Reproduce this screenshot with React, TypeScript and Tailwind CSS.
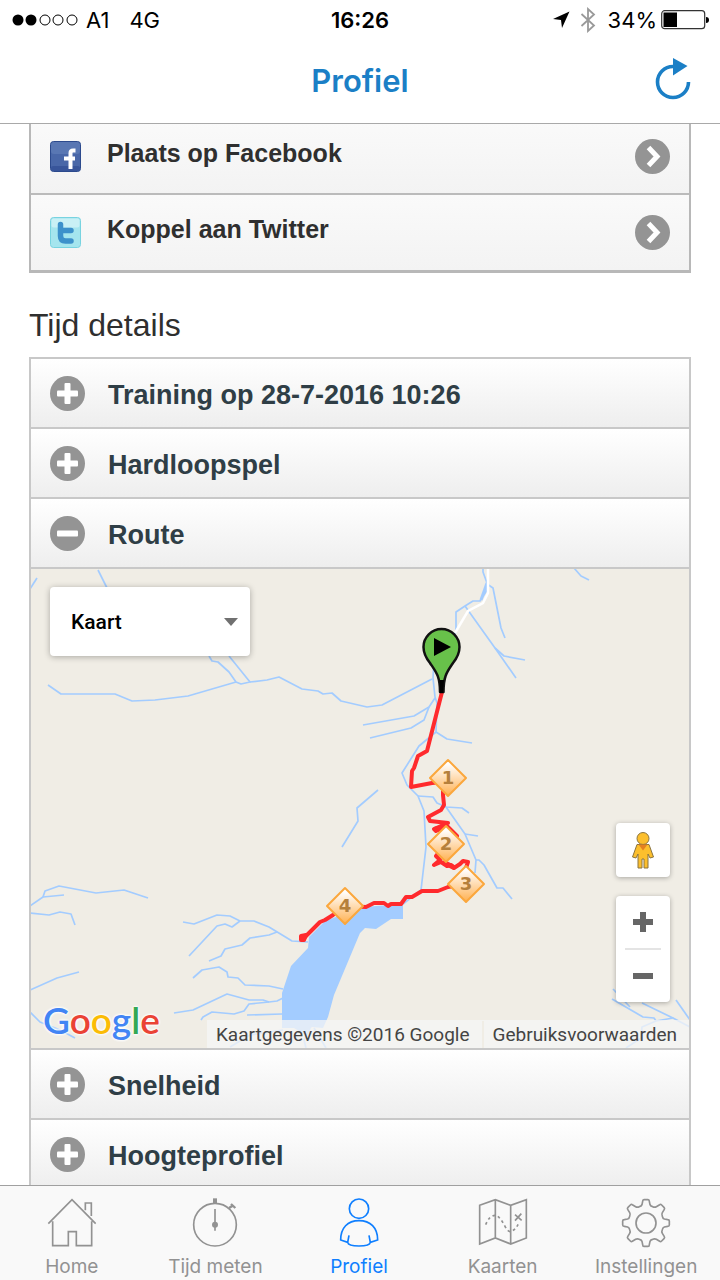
import type { ReactNode } from "react";

const streams = [
    "M30 589L37 578", "M98 570L107 588",
    "M209 656L212 661L218 662L229 672L236 682L241 684L250 682L229 656",
    "M48 685L61 694H115L132 701L155 700L188 696L236 682",
    "M250 682L267 680L279 677L302 689L318 691L323 694L332 693L341 701L367 707L382 705L432 679",
    "M483 568V572L487 583V590L480 601H473L465 606L456 612V632L434 660L433 678L435 697L437 703L436 732",
    "M487 584L493 588L501 628L505 638", "M465 606L495 648L516 678", "M495 648L504 656L525 660",
    "M574 568L581 576L589 580",
    "M435 698L429 707L414 716L363 725", "M429 707L424 720L411 728L370 738",
    "M436 732L447 739L472 743", "M436 732L419 746L402 773L407 785L418 796L424 811L426 847L421 890L403 904",
    "M418 796L433 797L437 803L446 807L462 808L469 813",
    "M446 807L465 834L476 860L475 873", "M465 834L478 836",
    "M476 860H479L484 865L497 888H503L512 899", "M378 790L357 808L358 821L342 847",
    "M30 906L43 897L64 895", "M43 897L45 891L59 886L96 893L124 890L148 898",
    "M30 913L49 915L60 912L71 914L75 925",
    "M183 922L194 924L217 915L230 916L240 921H254L269 927L292 941L308 942",
    "M189 956L217 926L225 924L232 927L240 921",
    "M209 961L221 956L225 949L242 945L250 938L269 935L277 932",
    "M193 978L202 970L219 967L227 972L228 977L238 978L245 985L269 986L283 989",
    "M174 1013L193 1010L227 994L249 1000H263L269 1002L277 1001L283 998",
    "M201 1020L203 1017L212 1012L234 1014L244 1011L249 1004L269 1002",
    "M247 1015L282 1014", "M30 990L57 978L79 972", "M30 1012L40 1022L60 1030L75 1038",
    "M230 1047L250 1035L283 1030", "M310 1028L304 1040L306 1048", "M314 1028L326 1048",
    "M612 999L643 1017L654 1018L656 1021L673 1018L642 1003", "M613 989L630 1007",
    "M673 1018L690 1027", "M676 1000L690 1020", "M656 1021L642 1027L641 1038L626 1048",
];

const kilometers = [
    { label: "1", x: 448, y: 778 },
    { label: "2", x: 446, y: 844 },
    { label: "3", x: 466, y: 884 },
    { label: "4", x: 345, y: 906 },
];

function StatusBar() {
    return (
        <div className="flex h-10 items-center px-3 font-[Inter,sans-serif] text-[22px] text-black">
            <div className="flex flex-1 items-center">
                <svg className="mr-2 h-3 w-[66px]" viewBox="0 0 66 12">
                    {[6, 19, 33, 46, 60].map((x, i) => (
                        <circle key={x} cx={x} cy="6" r={i < 2 ? 5.5 : 5} fill={i < 2 ? "#000" : "none"} stroke="#000" strokeWidth={i < 2 ? 0 : 1} />
                    ))}
                </svg>
                <span className="mr-5">A1</span>
                <span>4G</span>
            </div>
            <div className="font-semibold">16:26</div>
            <div className="flex flex-1 items-center justify-end">
                <svg className="mr-2.5 h-[18px] w-[18px]" viewBox="0 0 18 18">
                    <path d="M17.5.5L10 17L9 9L1 8Z" />
                </svg>
                <svg className="mr-3 h-[26px] w-4" viewBox="0 0 16 26" fill="none" stroke="#999" strokeWidth="1.8">
                    <path d="M1.500 7L14 18.500L8 24V2L14 7.500L1.500 19" />
                </svg>
                <span className="mr-1">34%</span>
                <svg className="-mr-px h-5 w-12" viewBox="0 0 48 20">
                    <rect x=".7" y=".7" width="43" height="18" rx="3" fill="none" stroke="#333" strokeWidth="1.2" />
                    <rect x="2.500" y="2.500" width="13.500" height="14.500" />
                    <path d="M45 7q3 0 3 3t-3 3z" />
                </svg>
            </div>
        </div>
    );
}

function ShareRow({ icon, children }: { icon: ReactNode, children: ReactNode }) {
    return (
        <a
            href="#"
            className="flex h-[75px] items-center bg-linear-to-b from-[#fafafa] to-[#f3f3f3] px-[19px] text-[25px] font-bold text-[#2f2f2f]"
        >
            {icon}
            <span className="flex-1 pb-1.5 pl-[26px]">{children}</span>
            <svg className="h-[35px] w-[35px]" viewBox="0 0 35 35">
                <circle cx="17.500" cy="17.500" r="17.500" fill="#949494" />
                <path d="M13.500 8.500L22 17.500L13.500 26.500" fill="none" stroke="#fff" strokeWidth="5" />
            </svg>
        </a>
    );
}

function SectionRow({ open = false, children }: { open?: boolean, children: ReactNode }) {
    return (
        <button
            aria-expanded={open}
            className="flex h-[70px] w-full items-center border-b-2 border-[#c8c8c8] bg-linear-to-b from-white to-[#eee] px-[19px] text-left text-[27px] font-bold text-[#2f3e46]"
        >
            <svg className="h-[35px] w-[35px]" viewBox="0 0 35 35">
                <circle cx="17.500" cy="17.500" r="17.500" fill="#949494" />
                <rect x="7" y="14.500" width="21" height="6" rx="1" fill="#fff" />
                {!open && <rect x="14.500" y="7" width="6" height="21" rx="1" fill="#fff" />}
            </svg>
            <span className="pt-1 pl-[23px]">{children}</span>
        </button>
    );
}

function MapDrawing() {
    return (
        <svg className="h-full w-full" viewBox="31 569 658 479" preserveAspectRatio="xMidYMid slice">
            <defs>
                <linearGradient id="km" x1="0" y1="0" x2="0" y2="1">
                    <stop offset="0.1" stopColor="#fff" />
                    <stop offset="1" stopColor="#ffb050" />
                </linearGradient>
            </defs>
            <path
                d="M403 904V919H391L376 929L365 928L360 933L334 995L328 1017L323 1028L312 1027L304 1034L294 1028H282V993L291 966L308 948L309 937L325 921L363 907Z"
                fill="#a3ccff"
            />
            <g fill="none" stroke="#a3ccff" strokeWidth="1.7" strokeLinejoin="round">
                {streams.map((d) => <path key={d} d={d} />)}
                <path d="M487 583L481 600" strokeWidth="3" />
            </g>
            <path d="M488 568V593L483 603L468 611L455 633" fill="none" stroke="#fff" strokeWidth="2.500" />
            <g fill="none" stroke="#ff2a2d" strokeWidth="4" strokeLinejoin="round" strokeLinecap="round">
                <path d="M442 692L427 751L418 756L414 768L412 771L411 787L432 783L443 782V795L444 805L441 810L428 817L430 821L448 823L434 829L436 831L447 826L457 836L440 851L436 856L440 860L434 865L441 862L447 866L451 865L454 868L460 864L463 861L468 862L466 868V884L448 887L438 891H422L412 897H406L401 904H391L388 906L384 903L374 903L366 907L345 906L333 915L325 920L320 922L308 934L303 939" />
                <path d="M301 936L306 935L304 940L301 940Z" />
                <path d="M436 829L444 828M445 863L453 867" strokeWidth="5" />
            </g>
            {kilometers.map((km) => (
                <g key={km.label}>
                    <path
                        d={`M${km.x} ${km.y - 18}l18 18l-18 18l-18-18z`}
                        fill="url(#km)"
                        stroke="#fba73c"
                        strokeWidth="2"
                        strokeLinejoin="round"
                    />
                    <text
                        x={km.x}
                        y={km.y + 6}
                        textAnchor="middle"
                        className="fill-[#b5803c] font-['DejaVu_Sans',sans-serif] text-[18px] font-bold"
                    >
                        {km.label}
                    </text>
                </g>
            ))}
            <path
                d="M440 692C440 676 436 672 430 663C426 658 423.500 654 423.500 647A18 18 0 0 1 459.500 647C459.500 654 457 658 453 663C447 672 443.500 676 443.500 692Z"
                fill="#68c14a"
                stroke="#111"
                strokeWidth="2.500"
                strokeLinejoin="round"
            />
            <path d="M439.500 680h4.500l-1 13h-3z" />
            <path d="M434 638L451 647L434 656Z" />
        </svg>
    );
}

function RouteMap() {
    return (
        <div className="relative h-[479px] overflow-hidden bg-[#f0ede5] font-[Roboto,sans-serif]">
            <MapDrawing />

            <div className="absolute top-[18px] left-[19px] h-[69px] w-[200px] rounded-sm bg-white shadow-[0_1px_6px_rgba(0,0,0,0.3)]">
                <select
                    aria-label="Kaarttype"
                    className="h-full w-full appearance-none bg-transparent px-[21px] pt-0.5 text-[21px] font-medium text-black outline-none"
                >
                    <option>Kaart</option>
                </select>
                <svg className="pointer-events-none absolute top-[31px] right-3 h-2 w-3.5" viewBox="0 0 14 8">
                    <path d="M0 0H14L7 8Z" fill="#707070" />
                </svg>
            </div>

            <div className="absolute right-[19px] bottom-[46px] flex w-[54px] flex-col gap-[19px]">
                <button aria-label="Street View" className="flex h-[54px] items-center justify-center rounded-sm bg-white shadow-[0_1px_5px_rgba(0,0,0,0.3)]">
                    <svg className="h-[38px] w-6" viewBox="0 0 24 38">
                        <g fill="#fcbf2d" stroke="#8a7440" strokeWidth="1">
                            <path d="M6 13.500H18L22.500 26L19 27L17 23V37H13V28H11V37H7V23L5 27L1.500 26Z" />
                            <circle cx="12" cy="7.500" r="6" />
                        </g>
                        <path d="M7.500 13.500H16.500L12 19.500Z" fill="#e58020" />
                    </svg>
                </button>
                <div className="flex h-[106px] flex-col items-center rounded-sm bg-white shadow-[0_1px_5px_rgba(0,0,0,0.3)]">
                    <button aria-label="Inzoomen" className="flex w-full flex-1 items-center justify-center">
                        <svg className="h-5 w-5" viewBox="0 0 20 20">
                            <path d="M7 0h6v7h7v6h-7v7H7v-7H0V7h7z" fill="#666" />
                        </svg>
                    </button>
                    <div className="h-0.5 w-9 bg-[#e4e4e4]" />
                    <button aria-label="Uitzoomen" className="flex w-full flex-1 items-center justify-center">
                        <svg className="h-1.5 w-5" viewBox="0 0 20 6">
                            <path d="M0 0h20v6H0z" fill="#666" />
                        </svg>
                    </button>
                </div>
            </div>

            <a
                href="#"
                aria-label="Google"
                className="absolute bottom-2 left-3 font-[Lato,sans-serif] text-[37px] leading-10 font-semibold text-[#4285f4] [text-shadow:0_0_3px_#fff,0_0_3px_#fff,0_0_3px_#fff]"
            >
                G<span className="text-[#ea4335]">o</span>
                <span className="text-[#fbbc05]">o</span>g
                <span className="text-[#34a853]">l</span>
                <span className="text-[#ea4335]">e</span>
            </a>

            <div className="absolute right-0 bottom-0 flex h-7 items-center bg-[#f5f5f5]/75 pt-0.5 text-[19px] text-[#444]">
                <span className="border-r-2 border-[#f0ede5] pr-3 pl-[9px]">Kaartgegevens ©2016 Google</span>
                <a href="#" className="pr-3 pl-[9px]">Gebruiksvoorwaarden</a>
            </div>
        </div>
    );
}

function Tab({ label, active = false, children, box }: { label: string, active?: boolean, children: ReactNode, box: string }) {
    return (
        <a href="#" className={`flex min-w-0 flex-1 flex-col items-center pt-3 ${active ? 'text-[#0f7fff]' : 'text-[#929292]'}`}>
            <svg className="h-[50px] w-[50px]" viewBox={box} fill="none" stroke="currentColor" strokeWidth="5">
                {children}
            </svg>
            <span className="mt-[7px] text-[19px] leading-6">{label}</span>
        </a>
    );
}

export default function App() {
    return (
        <div className="flex h-screen flex-col overflow-hidden bg-white font-['Liberation_Sans',sans-serif]">
            <header className="shrink-0 border-b border-[#a9a9a9]">
                <StatusBar />
                <div className="flex h-[83px] items-center px-[29px] font-[Inter,sans-serif]">
                    <h1 className="flex-1 pl-9 text-center text-[31px] font-semibold text-[#1b7fc6]">Profiel</h1>
                    <button aria-label="Vernieuwen" className="pb-1.5">
                        <svg className="h-[42px] w-9" viewBox="0 0 36 42">
                            <path d="M18 8.500A15.500 15.500 0 1 0 33.500 24" fill="none" stroke="#1b7fc6" strokeWidth="3.600" />
                            <path d="M18 0L32.500 8L18 17.500Z" fill="#1b7fc6" />
                        </svg>
                    </button>
                </div>
            </header>

            <main className="min-h-0 flex-1 overflow-hidden px-[29px]">
                <div className="-mt-1 divide-y-2 divide-[#bbb] border-x-2 border-b-[3px] border-[#b8b8b8]">
                    <ShareRow
                        icon={
                            <svg className="h-[31px] w-[31px]" viewBox="0 0 31 31">
                                <rect x=".5" y=".5" width="30" height="30" rx="3" fill="#4967a8" stroke="#2c4a8d" />
                                <rect x="1" y="1" width="29" height="12" rx="3" fill="#6482bb" opacity=".6" />
                                <rect x="1" y="25" width="29" height="5" rx="2" fill="#38559a" />
                                <path d="M25.500 9.500H23Q20.500 9.500 20.500 12V28M14 17.500H25" fill="none" stroke="#fff" strokeWidth="4" />
                            </svg>
                        }
                    >
                        Plaats op Facebook
                    </ShareRow>
                    <ShareRow
                        icon={
                            <svg className="h-[31px] w-[31px]" viewBox="0 0 31 31">
                                <rect x=".5" y=".5" width="30" height="30" rx="3" fill="#a5e5ee" stroke="#78d3e0" />
                                <rect x="1.500" y="1.500" width="28" height="9" rx="2" fill="#c9f0f5" />
                                <path d="M10.500 7.500V19Q10.500 24 15.500 24H21M11 13.500H21" fill="none" stroke="#3d91cb" strokeWidth="5.500" strokeLinecap="round" />
                            </svg>
                        }
                    >
                        Koppel aan Twitter
                    </ShareRow>
                </div>

                <h2 className="pt-8 pb-3 text-[32px] leading-10 text-[#2f2f2f]">Tijd details</h2>

                <div className="border-x-2 border-t-2 border-[#c8c8c8]">
                    <SectionRow>Training op 28-7-2016 10:26</SectionRow>
                    <SectionRow>Hardloopspel</SectionRow>
                    <SectionRow open>Route</SectionRow>
                    <div className="border-b-2 border-[#c8c8c8]">
                        <RouteMap />
                    </div>
                    <SectionRow>Snelheid</SectionRow>
                    <SectionRow>Hoogteprofiel</SectionRow>
                </div>
            </main>

            <nav className="flex h-[95px] shrink-0 border-t border-[#a0a0a0] bg-[#f9f9f9] pr-0.5 font-[Inter,sans-serif]">
                <Tab label="Home" box="138 54 150 150">
                    <path d="M142 131L213 59L284 131M155 124V197H202V155H226V197H272V124M253 91V69H271V108" />
                </Tab>
                <Tab label="Tijd meten" box="573 54 150 150">
                    <circle cx="648" cy="134" r="64" />
                    <path d="M648 55V72" strokeWidth="12" />
                    <path d="M648 87V152" />
                    <circle cx="648" cy="134" r="9" fill="currentColor" stroke="none" />
                    <path d="M690 84L701 77M696 72L709 84" strokeWidth="7" />
                </Tab>
                <Tab label="Profiel" box="1002 54 150 150" active>
                    <circle cx="1077" cy="86" r="29" />
                    <path d="M1047 166L1043 187L1022 180C1022 143 1043 122 1077 122S1133 143 1133 180L1111 187L1107 166M1043 187Q1045 198 1077 198T1111 187" />
                </Tab>
                <Tab label="Kaarten" box="237 54 150 150">
                    <path d="M242 76L289 59L335 76L382 59V174L335 192L289 174L242 192ZM289 59V174M335 76V192" />
                    <path d="M260 134Q272 105 290 106Q302 109 318 139Q328 158 336 154Q352 149 360 126" strokeDasharray="8 9" />
                    <path d="M348 104L368 121M367 101L348 122" />
                </Tab>
                <Tab label="Instellingen" box="666 52 150 150">
                    <circle cx="741" cy="127" r="30" strokeWidth="5" />
                    <path
                        strokeWidth="5"
                        strokeLinejoin="round"
                        d="M735 57H747Q751 57 751 62L753 72Q755 77 761 78Q767 81 772 78L782 72Q785 70 788 73L795 80Q798 83 796 86L790 96Q787 101 790 107Q791 113 796 115L806 117Q811 117 811 121V133Q811 137 806 137L796 139Q791 141 790 147Q787 153 790 158L796 168Q798 171 795 174L788 181Q785 184 782 182L772 176Q767 173 761 176Q755 177 753 182L751 192Q751 197 747 197H735Q731 197 731 192L729 182Q727 177 721 176Q715 173 710 176L700 182Q697 184 694 181L687 174Q684 171 686 168L692 158Q695 153 692 147Q691 141 686 139L676 137Q671 137 671 133V121Q671 117 676 117L686 115Q691 113 692 107Q695 101 692 96L686 86Q684 83 687 80L694 73Q697 70 700 72L710 78Q715 81 721 78Q727 77 729 72L731 62Q731 57 735 57Z"
                    />
                </Tab>
            </nav>
        </div>
    );
}
